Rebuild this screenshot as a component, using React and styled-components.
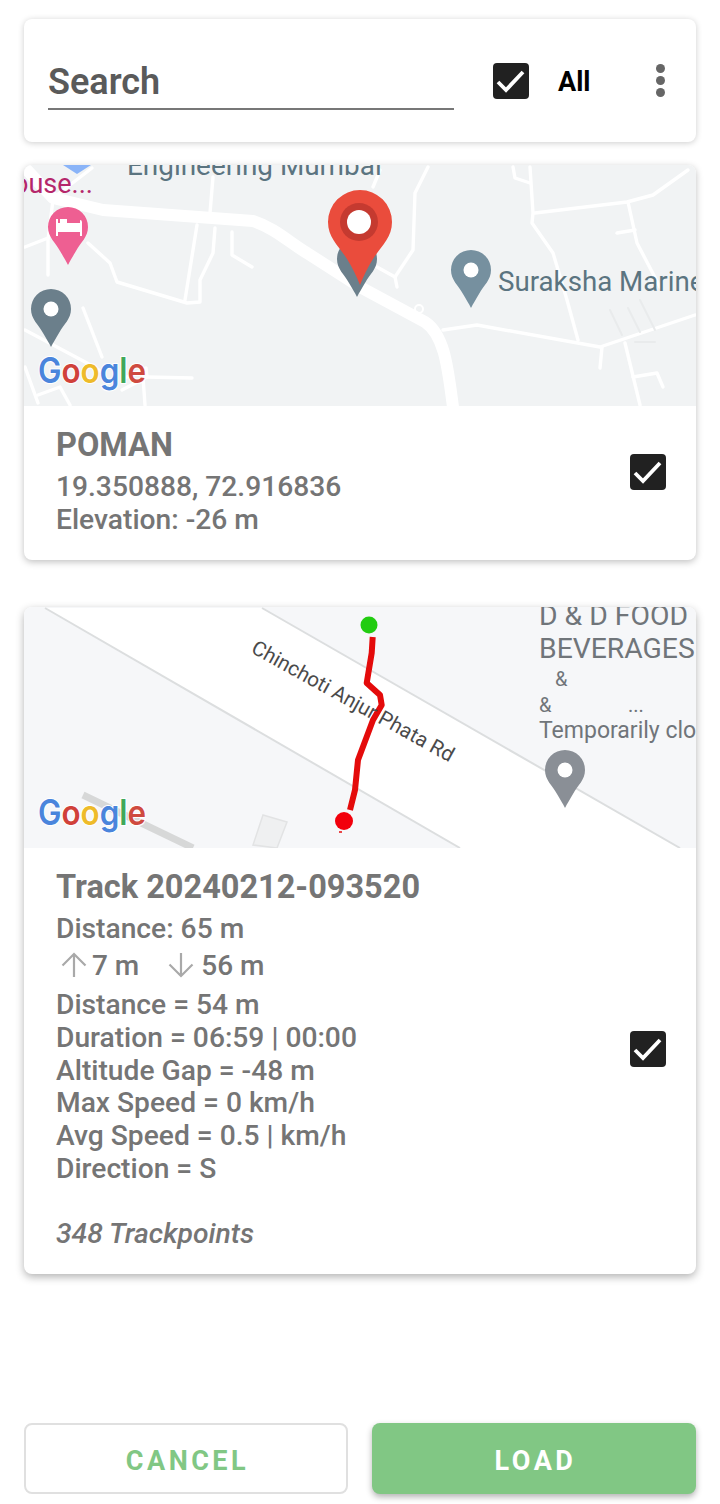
import React from 'react'
import styled, { createGlobalStyle } from 'styled-components'

const GlobalStyle = createGlobalStyle`
    html, body {
        margin: 0;
        padding: 0;
        background: #fff;
        font-family: Roboto, "Liberation Sans", sans-serif;
    }
    * { box-sizing: border-box; }
`;

const GREY_PIN = 'M0 0a20 20 0 0 1 20 20c0 10-7 15-12 24-3 5-6 10-8 14-2-4-5-9-8-14-5-9-12-14-12-24A20 20 0 0 1 0 0z'

const roadsTop = [
    '213,177 210,213', '197,225 185,300', '215,228 213,253 200,280 200,302 187,303 117,282 110,263 88,243',
    '232,232 232,255 252,267', '25,247 48,238', '48,275 48,240 53,200', '83,308 102,357', '25,330 87,363 102,372',
    '25,367 38,403', '38,395 60,387 70,405', '122,390 147,377 146,368 125,378', '147,377 192,378', '143,377 145,405',
    '92,168 53,198', '428,167 415,193 413,250 395,277', '377,267 395,277 397,287', '380,170 373,187',
    '513,167 515,178 530,183', '530,167 533,213 532,223 553,253 567,300 578,340',
    '535,213 627,202 653,195 688,170', '628,202 637,243 660,287', '617,233 635,230',
    '443,330 477,325 600,347 695,315', '602,347 600,368', '625,343 640,405', '633,377 657,373 663,387',
]

function Pin({ x, y, fill }) {
    return (
        <g transform={`translate(${x} ${y})`}>
            <path d={GREY_PIN} fill={fill} />
            <circle cx="0" cy="20" r="7.5" fill="#fff" />
        </g>
    )
}

function GoogleMark({ y }) {
    return (
        <GoogleText x="38" y={y} textLength="108" lengthAdjust="spacingAndGlyphs">
            <tspan fill="#4a85dc">G</tspan>
            <tspan fill="#d0413a">o</tspan>
            <tspan fill="#eebb2a">o</tspan>
            <tspan fill="#4a85dc">g</tspan>
            <tspan fill="#3fa85a">l</tspan>
            <tspan fill="#cf4a40">e</tspan>
        </GoogleText>
    )
}

function PomanMap() {
    return (
        <MapSvg viewBox="24 165 672 241">
            <rect x="24" y="165" width="672" height="241" fill="#f1f3f4" />
            <g fill="none" stroke="#fff" strokeLinejoin="round" strokeLinecap="round">
                {roadsTop.map((points) => <polyline key={points} points={points} strokeWidth="3.4" />)}
                <path d="M27 170L53 198L103 210L253 221C275 228 290 243 307 253L360 287L425 322C445 335 448 370 453 407" strokeWidth="12" />
                <circle cx="419" cy="309" r="4" strokeWidth="2" />
                <g stroke="#e9ebec" strokeWidth="2">
                    <polyline points="610,310 622,335" />
                    <polyline points="628,308 640,332" />
                    <polyline points="640,300 655,330" />
                    <polyline points="635,342 655,342" />
                </g>
            </g>
            <path d="M63 165l14 9 14-9z" fill="#8ab4f8" />
            <MapLabel x="127" y="175" $size={27.9} fill="#5b7480">Engineering Mumbai</MapLabel>
            <MapLabel x="13" y="193" $size={27} fill="#b5266a">ouse...</MapLabel>
            <MapLabel x="498" y="291" $size={27.7} fill="#5b7480">Suraksha Marine</MapLabel>
            <path d="M68 207a20 20 0 0 1 20 20c0 10-7 15-12 24-3 5-6 10-8 14-2-4-5-9-8-14-5-9-12-14-12-24a20 20 0 0 1 20-20z" fill="#ee5f92" />
            <path d="M56 219h2v4h22v-3a2 2 0 0 1 2 2v14h-2v-4H58v4h-2zM60 219h7v4h-7zM69 224h11v4H58v-3z" fill="#fff" />
            <Pin x={51} y={289} fill="#6b7f8b" />
            <Pin x={471} y={250} fill="#76909f" />
            <Pin x={357} y={239} fill="#6b7f8b" />
            <path d="M360 190a32 32 0 0 1 32 32c0 16-11 24-19 37-5 8-10 18-13 26-3-8-8-18-13-26-8-13-19-21-19-37a32 32 0 0 1 32-32z" fill="#ea4c3c" />
            <circle cx="359" cy="222" r="19" fill="#c53a30" />
            <circle cx="359" cy="222" r="12" fill="#fff" />
            <GoogleMark y="383" />
        </MapSvg>
    )
}

function TrackMap() {
    return (
        <MapSvg viewBox="24 607 672 241">
            <rect x="24" y="607" width="672" height="241" fill="#f6f7f9" />
            <polygon points="45,608 262,608 680,848 460,848" fill="#fff" />
            <g stroke="#dcdedf" strokeWidth="2" fill="none">
                <line x1="45" y1="608" x2="460" y2="848" />
                <line x1="262" y1="608" x2="680" y2="848" />
            </g>
            <line x1="83" y1="795" x2="193" y2="848" stroke="#d7d8d8" strokeWidth="7" />
            <polygon points="263,815 287,822 277,848 253,845" fill="#eff0f1" stroke="#e2e3e4" strokeWidth="1.5" />
            <polyline points="372.7,637 371.7,653 366.7,683 380,695 381.7,705 373,720 358,760 355,790 350,810" fill="none" stroke="#e40b0b" strokeWidth="6" strokeLinejoin="round" />
            <RoadLabel x="250" y="652" transform="rotate(29 250 652)">Chinchoti Anjur Phata Rd</RoadLabel>
            <circle cx="369" cy="625" r="8.5" fill="#22cc11" />
            <circle cx="344" cy="821" r="9" fill="#f2000c" />
            <line x1="339" y1="832" x2="342" y2="832" stroke="#e40b0b" strokeWidth="1.5" />
            <MapLabel x="539" y="625" $size={28.3} fill="#70757a">D &amp; D FOOD &amp;</MapLabel>
            <MapLabel x="539" y="658" $size={28.3} fill="#70757a">BEVERAGES</MapLabel>
            <MapLabel x="555" y="686" $size={20} fill="#70757a">&amp;</MapLabel>
            <MapLabel x="539" y="712" $size={20} fill="#70757a">&amp;</MapLabel>
            <MapLabel x="628" y="712" $size={20} fill="#70757a">...</MapLabel>
            <MapLabel x="539" y="738" $size={23} fill="#70757a">Temporarily closed</MapLabel>
            <Pin x={565} y={750} fill="#8a8f96" />
            <GoogleMark y="825" />
        </MapSvg>
    )
}

function CheckBox() {
    return (
        <Box>
            <svg width="100%" height="100%" viewBox="0 0 36 36">
                <polyline points="5,19 13,27 30,9" fill="none" stroke="#fff" strokeWidth="3.8" />
            </svg>
        </Box>
    )
}

function Arrow({ down }) {
    return (
        <ArrowIcon viewBox="0 0 26 26" fill="none" stroke="#a9a9a9" strokeWidth="2.2">
            {down
                ? <path d="M13 1v23M1.5 12.5L13 24l11.5-11.5" />
                : <path d="M13 25V2M1.5 13.5L13 2l11.5 11.5" />}
        </ArrowIcon>
    )
}

function App() {
    return (
        <>
            <GlobalStyle />
            <Page>
                <SearchCard>
                    <SearchField>Search</SearchField>
                    <CheckBox />
                    <AllLabel>All</AllLabel>
                    <MenuDots><i /><i /><i /></MenuDots>
                </SearchCard>

                <Card>
                    <PomanMap />
                    <CardBody>
                        <Details>
                            <Title>POMAN</Title>
                            <Line>19.350888, 72.916836</Line>
                            <Line>Elevation: -26 m</Line>
                        </Details>
                        <CardCheck><CheckBox /></CardCheck>
                    </CardBody>
                </Card>

                <TrackCard>
                    <TrackMap />
                    <CardBody>
                        <Details>
                            <Title>Track 20240212-093520</Title>
                            <Line>Distance: 65 m</Line>
                            <ClimbRow>
                                <Arrow /><span>7 m</span>
                                <Descent><Arrow down /><span>56 m</span></Descent>
                            </ClimbRow>
                            <Stats>
                                <Line>Distance = 54 m</Line>
                                <Line>Duration = 06:59 | 00:00</Line>
                                <Line>Altitude Gap = -48 m</Line>
                                <Line>Max Speed = 0 km/h</Line>
                                <Line>Avg Speed = 0.5 | km/h</Line>
                                <Line>Direction = S</Line>
                            </Stats>
                            <Points>348 Trackpoints</Points>
                        </Details>
                        <CardCheck><CheckBox /></CardCheck>
                    </CardBody>
                </TrackCard>

                <Actions>
                    <CancelButton>CANCEL</CancelButton>
                    <LoadButton>LOAD</LoadButton>
                </Actions>
            </Page>
        </>
    )
}

const Page = styled.div`
    width: 720px;
    height: 1504px;
    padding: 19px 24px 10px;
    display: flex;
    flex-direction: column;
    overflow: hidden;
    color: #757575;
`;

const SearchCard = styled.div`
    height: 123px;
    flex: none;
    display: flex;
    align-items: center;
    padding: 0 31px 0 24px;
    background: #fff;
    border-radius: 8px;
    box-shadow: 0 1px 6px rgba(0, 0, 0, 0.2);
`;

const SearchField = styled.div`
    width: 406px;
    height: 48px;
    margin-top: 10px;
    margin-right: 39px;
    border-bottom: 2px solid #777;
    font-size: 36px;
    font-weight: 600;
    line-height: 40px;
    color: #5a5a5a;
`;

const Box = styled.div`
    width: 36px;
    height: 36px;
    flex: none;
    background: #212121;
    border-radius: 4px;
`;

const AllLabel = styled.div`
    margin-left: 29px;
    margin-top: 2px;
    font-size: 27px;
    font-weight: 700;
    color: #000;
`;

const MenuDots = styled.div`
    margin-left: auto;
    width: 9px;
    display: flex;
    flex-direction: column;
    gap: 3px;
    i {
        width: 9px;
        height: 9px;
        border-radius: 50%;
        background: #666;
    }
`;

const Card = styled.div`
    margin-top: 23px;
    height: 395px;
    flex: none;
    display: flex;
    flex-direction: column;
    background: #fff;
    border-radius: 8px;
    overflow: hidden;
    box-shadow: 0 2px 7px rgba(0, 0, 0, 0.25);
`;

const TrackCard = styled(Card)`
    margin-top: 47px;
    height: 667px;
    box-shadow: 0 3px 9px rgba(0, 0, 0, 0.3);
`;

const MapSvg = styled.svg`
    display: block;
    width: 672px;
    height: 241px;
    flex: none;
`;

const MapLabel = styled.text`
    font-family: Roboto, sans-serif;
    font-size: ${(p) => p.$size}px;
`;

const RoadLabel = styled.text`
    font-family: Roboto, sans-serif;
    font-size: 20.6px;
    fill: #4a4a4a;
`;

const GoogleText = styled.text`
    font-family: Inter, sans-serif;
    font-size: 35px;
    font-weight: 600;
    stroke: #fff;
    stroke-width: 2px;
    paint-order: stroke;
`;

const CardBody = styled.div`
    flex: 1;
    display: flex;
    align-items: center;
    justify-content: space-between;
    padding: 21px 30px 25px 32px;
`;

const Details = styled.div`
    display: flex;
    flex-direction: column;
`;

const CardCheck = styled.div`
    margin-bottom: 20px;
`;

const Title = styled.div`
    margin-bottom: 7px;
    font-size: 32.5px;
    font-weight: 700;
    line-height: 36px;
`;

const Line = styled.div`
    font-size: 28.2px;
    font-weight: 500;
    line-height: 33px;
`;

const ClimbRow = styled.div`
    height: 40px;
    padding-left: 5px;
    display: flex;
    align-items: center;
    gap: 5px;
    font-size: 28px;
    font-weight: 500;
`;

const Descent = styled.div`
    display: flex;
    align-items: center;
    gap: 7px;
    margin-left: 24px;
`;

const ArrowIcon = styled.svg`
    width: 26px;
    height: 26px;
    flex: none;
`;

const Stats = styled.div`
    margin-top: 4px;
    ${Line} {
        line-height: 32.8px;
    }
`;

const Points = styled.div`
    margin-top: 31px;
    font-size: 28.3px;
    font-style: italic;
    font-weight: 500;
    line-height: 33px;
`;

const Actions = styled.div`
    margin-top: auto;
    display: flex;
    gap: 24px;
`;

const CancelButton = styled.div`
    width: 324px;
    height: 71px;
    padding: 4px 0 0 3px;
    display: flex;
    align-items: center;
    justify-content: center;
    border: 2px solid #e0e0e0;
    border-radius: 8px;
    background: #fff;
    color: #81c784;
    font-size: 27px;
    font-weight: 700;
    letter-spacing: 3.5px;
`;

const LoadButton = styled(CancelButton)`
    border: none;
    background: #81c784;
    color: #fff;
    box-shadow: 0 3px 6px rgba(0, 0, 0, 0.3);
`;

export default App
